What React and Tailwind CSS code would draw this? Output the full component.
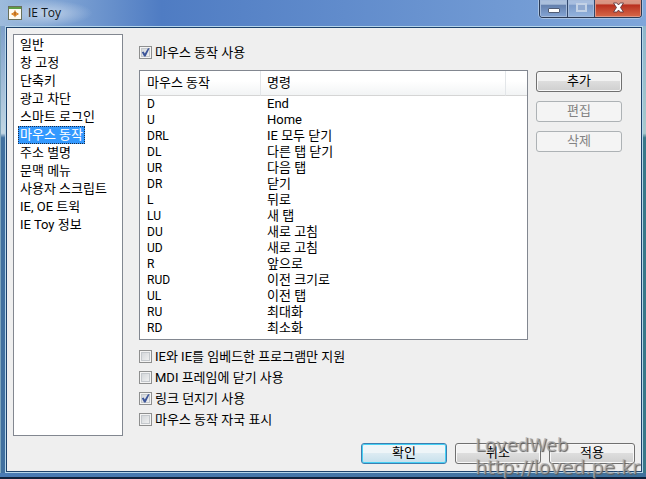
import { useState } from "react";

const sections = [
  "일반",
  "창 고정",
  "단축키",
  "광고 차단",
  "스마트 로그인",
  "마우스 동작",
  "주소 별명",
  "문맥 메뉴",
  "사용자 스크립트",
  "IE, OE 트윅",
  "IE Toy 정보",
];

const gestures = [
  ["D", "End"],
  ["U", "Home"],
  ["DRL", "IE 모두 닫기"],
  ["DL", "다른 탭 닫기"],
  ["UR", "다음 탭"],
  ["DR", "닫기"],
  ["L", "뒤로"],
  ["LU", "새 탭"],
  ["DU", "새로 고침"],
  ["UD", "새로 고침"],
  ["R", "앞으로"],
  ["RUD", "이전 크기로"],
  ["UL", "이전 탭"],
  ["RU", "최대화"],
  ["RD", "최소화"],
];

const options = [
  { id: "embed", label: "IE와 IE를 임베드한 프로그램만 지원", on: false },
  { id: "mdi", label: "MDI 프레임에 닫기 사용", on: false },
  { id: "throw", label: "링크 던지기 사용", on: true },
  { id: "trail", label: "마우스 동작 자국 표시", on: false },
];

function CheckBox({ id, label, on }) {
  return (
    <div className="flex h-[21px] items-center gap-[3px]">
      <span className="grid size-[13px] shrink-0">
        <input
          id={id}
          type="checkbox"
          defaultChecked={on}
          className="peer col-start-1 row-start-1 size-[13px] appearance-none border border-[#8e8f8f] bg-linear-to-br from-[#cdd1d5] to-[#f6f6f6] shadow-[inset_0_0_0_1px_#f4f4f4,inset_0_0_0_2px_#c4c8cc]"
        />
        <svg
          viewBox="0 0 13 13"
          className="pointer-events-none invisible col-start-1 row-start-1 size-[13px] peer-checked:visible"
          aria-hidden="true"
        >
          <path d="M2.800 6.200 L4.600 5.400 L5.800 7.600 L9 2.200 L10.600 2.200 L6.600 10.600 L5.100 10.600 Z" fill="#3c5599" />
        </svg>
      </span>
      <label htmlFor={id}>{label}</label>
    </div>
  );
}

function PushButton({ children, disabled, primary }) {
  const look = disabled
    ? "border-[#adb2b5] bg-[#f4f4f4] text-[#838383]"
    : primary
      ? "border-[#3c7fb1] bg-linear-to-b from-[#eef5f8] from-45% via-[#dcebf2] via-50% to-[#c6e0ec] shadow-[inset_0_0_0_1px_#46d0f4]"
      : "border-[#707070] bg-linear-to-b from-[#f2f2f2] from-45% via-[#dddddd] via-50% to-[#cfcfcf] shadow-[inset_0_0_0_1px_#f8f8f8]";
  return (
    <button
      type="button"
      disabled={disabled}
      className={`flex h-[21px] w-[86px] items-center justify-center rounded-[3px] border pb-px ${look}`}
    >
      {children}
    </button>
  );
}

function TitleBar() {
  return (
    <header className="flex h-[26px] items-start justify-between bg-linear-to-r from-[#9dbbdc] from-0% via-[#4f7cc3] via-25% to-[#7fa6da]">
      <div className="flex h-[26px] items-center gap-[6px] bg-radial from-[#bdd0e8] to-transparent to-70% pr-8 pl-2">
        <svg viewBox="0 0 14 14" className="size-[14px]" aria-hidden="true">
          <rect x="0.5" y="0.5" width="13" height="13" fill="#fdfcf4" stroke="#69705b" />
          <path d="M1 1h12v2H1z" fill="#5f9d45" />
          <path d="M7 4.200v7M3.600 8L7 6l3.400 2L7 10z" fill="#f0a040" stroke="#d57f22" strokeWidth="0.9" />
          <path d="M7 5.500v3.500" stroke="#9b5514" />
        </svg>
        <h1 className="font-['Open_Sans','Noto_Sans',sans-serif] text-[12px] leading-4 text-[#101820]">IE Toy</h1>
      </div>
      <div className="mr-[4px] flex h-[18px] overflow-hidden rounded-b-[4px] border border-t-0 border-[#2a3a55] shadow-[0_0_0_1px_#a9c3e4]">
        <button
          type="button"
          aria-label="최소화"
          className="flex w-[28px] justify-center border-r border-[#30476c] bg-linear-to-b from-[#aabfdc] from-25% via-[#6480ad] via-30% to-[#84a5d5] pt-2 shadow-[inset_0_0_0_1px_#a5bbdb]"
        >
          <span className="h-[5px] w-[12px] rounded-[1px] border border-[#515d75] bg-white" />
        </button>
        <button
          type="button"
          aria-label="최대화"
          disabled
          className="flex w-[27px] justify-center border-r border-[#30476c] bg-linear-to-b from-[#a8bedf] from-25% via-[#7c9bc9] via-30% to-[#93b3de] pt-[3px] shadow-[inset_0_0_0_1px_#a5bbdb]"
        >
          <span className="h-[9px] w-[11px] border-2 border-[#c3d2e6] bg-[#91aad0]" />
        </button>
        <button
          type="button"
          aria-label="닫기"
          className="flex w-[46px] justify-center bg-linear-to-b from-[#d99583] from-20% via-[#b92f1e] via-30% to-[#d66849] pt-[2px] shadow-[inset_0_0_0_1px_#df9684]"
        >
          <svg viewBox="0 0 13 11" className="h-[11px] w-[13px]" aria-hidden="true">
            <path
              d="M1.500 1h3.400l1.600 2L8.100 1h3.400L8.500 5.500l3 4.500H8.100L6.500 8 4.900 10H1.500l3-4.500z"
              fill="#fff"
              stroke="#563037"
              strokeWidth="0.8"
            />
          </svg>
        </button>
      </div>
    </header>
  );
}

export default function App() {
  const [selected, setSelected] = useState("마우스 동작");

  return (
    <div className="relative flex min-h-screen flex-col overflow-hidden bg-[#4674ad] font-['Roboto','Noto_Sans_CJK_KR',sans-serif] text-[13px] leading-4 text-black">
      <TitleBar />
      <div className="flex grow">
        <div className="w-[5px] shrink-0 border-l border-[#7fa6bd] bg-linear-to-b from-[#7d9fca] from-0% via-[#c2d6e2] via-24% to-[#41709f] to-25%" />
        <main className="flex min-w-0 grow flex-col border border-[#b5d5ea]">
          <div className="flex grow flex-col border border-[#1d426c] bg-[#efefef] p-[6px] pb-[7px]">
            <div className="flex grow gap-4">
              <div role="listbox" aria-label="설정 항목" className="w-[110px] shrink-0 border border-[#828790] bg-white pt-px pl-[4px]">
                {sections.map((name) => (
                  <button
                    key={name}
                    type="button"
                    role="option"
                    aria-selected={name === selected}
                    onClick={() => setSelected(name)}
                    className="block h-[18px] border border-transparent px-px text-left whitespace-nowrap aria-selected:border-dotted aria-selected:border-[#1c2b45] aria-selected:bg-[#3399ff] aria-selected:text-white"
                  >
                    {name}
                  </button>
                ))}
              </div>

              <div className="flex min-w-0 grow flex-col pt-2 pr-[13px] pb-[5px]">
                <CheckBox id="gestures" label="마우스 동작 사용" on />
                <div className="mt-[7px] flex gap-2">
                  <div className="h-[270px] min-w-0 grow border border-[#828790] bg-white">
                    <table className="w-full table-fixed border-separate border-spacing-0 text-left">
                      <colgroup>
                        <col className="w-[121px]" />
                        <col />
                        <col className="w-[21px]" />
                      </colgroup>
                      <thead>
                        <tr className="h-[25px] bg-linear-to-b from-white from-40% to-[#f1f3f4]">
                          <th className="border-r border-b border-r-[#e3e6e9] border-b-[#d5d5d5] px-[7px] py-0 font-normal">마우스 동작</th>
                          <th className="border-r border-b border-r-[#e3e6e9] border-b-[#d5d5d5] px-[6px] py-0 font-normal">명령</th>
                          <th className="border-b border-[#d5d5d5] p-0" aria-label="여백" />
                        </tr>
                      </thead>
                      <tbody>
                        {gestures.map(([keys, command]) => (
                          <tr key={keys} className="h-4">
                            <td className="px-[7px] py-0 text-[12px] leading-4">{keys}</td>
                            <td className="px-[6px] py-0 leading-4">{command}</td>
                            <td className="p-0" />
                          </tr>
                        ))}
                      </tbody>
                    </table>
                  </div>
                  <div className="flex flex-col gap-[9px] pt-px">
                    <PushButton>추가</PushButton>
                    <PushButton disabled>편집</PushButton>
                    <PushButton disabled>삭제</PushButton>
                  </div>
                </div>
                <div className="mt-[6px]">
                  {options.map((option) => (
                    <CheckBox key={option.id} {...option} />
                  ))}
                </div>
              </div>
            </div>
            <footer className="mt-[7px] flex justify-end gap-2">
              <PushButton primary>확인</PushButton>
              <PushButton>취소</PushButton>
              <PushButton>적용</PushButton>
            </footer>
          </div>
        </main>
        <div className="w-[3px] shrink-0 bg-linear-to-b from-[#8eb7cb] from-0% via-[#a8c9cd] via-24% to-[#39788a] to-25%" />
      </div>
      <div className="h-[6px] shrink-0 border-b-2 border-[#10213c] bg-linear-to-r from-[#4a7bb5] to-[#40719c]" />
      <p className="pointer-events-none absolute right-[5px] bottom-0 w-[166px] font-['DejaVu_Sans',sans-serif] text-[18px] leading-[22px] whitespace-nowrap text-[#b0b0b0]/70 [text-shadow:1px_1px_1px_#5c5c5c]">
        LovedWeb
        <br />
        <span className="text-[19px]">http://loved.pe.kr</span>
      </p>
    </div>
  );
}
